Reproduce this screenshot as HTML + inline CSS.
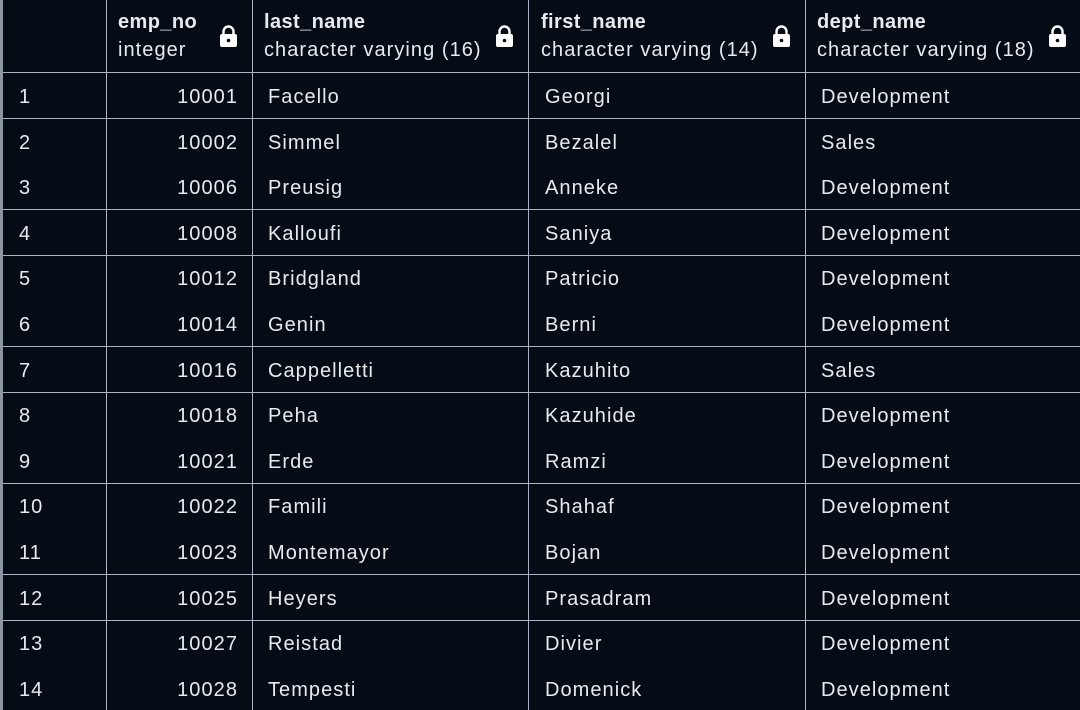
<!DOCTYPE html>
<html><head><style>
body{margin:0;width:1080px;height:710px;background:#060c15;overflow:hidden;font-family:"Liberation Sans",Arial,sans-serif;color:#e8eaed;position:relative}
.v{position:absolute;top:0;height:710px;width:1px;background:#a9b3c1}
.h{position:absolute;left:3px;width:1077px;height:1px;background:#a9b3c1}
.t{position:absolute;font-size:20px;white-space:nowrap;line-height:24px;letter-spacing:1.05px}
.n{font-weight:bold;letter-spacing:0.4px}
.r{text-align:right}
svg{position:absolute}
</style></head><body>
<div style="position:absolute;left:0;top:0;width:3px;height:710px;background:#8d96a3"></div>
<div class="v" style="left:106px"></div>
<div class="v" style="left:252px"></div>
<div class="v" style="left:528px"></div>
<div class="v" style="left:805px"></div>
<div class="h" style="top:72px"></div>
<div class="h" style="top:118px"></div>
<div class="h" style="top:209px"></div>
<div class="h" style="top:255px"></div>
<div class="h" style="top:346px"></div>
<div class="h" style="top:392px"></div>
<div class="h" style="top:483px"></div>
<div class="h" style="top:574px"></div>
<div class="h" style="top:620px"></div>

<div class="t n" style="left:118px;top:10px">emp_no</div>
<div class="t" style="left:118px;top:38px">integer</div>
<div class="t n" style="left:264px;top:10px">last_name</div>
<div class="t" style="left:264px;top:38px">character varying (16)</div>
<div class="t n" style="left:541px;top:10px">first_name</div>
<div class="t" style="left:541px;top:38px">character varying (14)</div>
<div class="t n" style="left:817px;top:10px">dept_name</div>
<div class="t" style="left:817px;top:38px">character varying (18)</div>

<svg style="left:219px;top:25px" width="19" height="23" viewBox="0 0 19 23"><path d="M4.5 10V6.5a5 5 0 0 1 10 0V10" fill="none" stroke="#fff" stroke-width="2.4"/><rect x="1" y="9" width="17" height="13" rx="2" fill="#fff"/><circle cx="9.5" cy="15.5" r="1.8" fill="#060c15"/></svg>
<svg style="left:495px;top:25px" width="19" height="23" viewBox="0 0 19 23"><path d="M4.5 10V6.5a5 5 0 0 1 10 0V10" fill="none" stroke="#fff" stroke-width="2.4"/><rect x="1" y="9" width="17" height="13" rx="2" fill="#fff"/><circle cx="9.5" cy="15.5" r="1.8" fill="#060c15"/></svg>
<svg style="left:772px;top:25px" width="19" height="23" viewBox="0 0 19 23"><path d="M4.5 10V6.5a5 5 0 0 1 10 0V10" fill="none" stroke="#fff" stroke-width="2.4"/><rect x="1" y="9" width="17" height="13" rx="2" fill="#fff"/><circle cx="9.5" cy="15.5" r="1.8" fill="#060c15"/></svg>
<svg style="left:1048px;top:25px" width="19" height="23" viewBox="0 0 19 23"><path d="M4.5 10V6.5a5 5 0 0 1 10 0V10" fill="none" stroke="#fff" stroke-width="2.4"/><rect x="1" y="9" width="17" height="13" rx="2" fill="#fff"/><circle cx="9.5" cy="15.5" r="1.8" fill="#060c15"/></svg>

<div id="rows"></div>
<script>
var d=[["10001","Facello","Georgi","Development"],["10002","Simmel","Bezalel","Sales"],["10006","Preusig","Anneke","Development"],["10008","Kalloufi","Saniya","Development"],["10012","Bridgland","Patricio","Development"],["10014","Genin","Berni","Development"],["10016","Cappelletti","Kazuhito","Sales"],["10018","Peha","Kazuhide","Development"],["10021","Erde","Ramzi","Development"],["10022","Famili","Shahaf","Development"],["10023","Montemayor","Bojan","Development"],["10025","Heyers","Prasadram","Development"],["10027","Reistad","Divier","Development"],["10028","Tempesti","Domenick","Development"]];
var h="";
d.forEach(function(r,i){var y=Math.round(85+i*45.6);
h+='<div class="t" style="left:19px;top:'+y+'px">'+(i+1)+'</div>';
h+='<div class="t r" style="left:120px;width:118px;top:'+y+'px">'+r[0]+'</div>';
h+='<div class="t" style="left:268px;top:'+y+'px">'+r[1]+'</div>';
h+='<div class="t" style="left:545px;top:'+y+'px">'+r[2]+'</div>';
h+='<div class="t" style="left:821px;top:'+y+'px">'+r[3]+'</div>';});
document.getElementById("rows").innerHTML=h;
</script>
</body></html>
